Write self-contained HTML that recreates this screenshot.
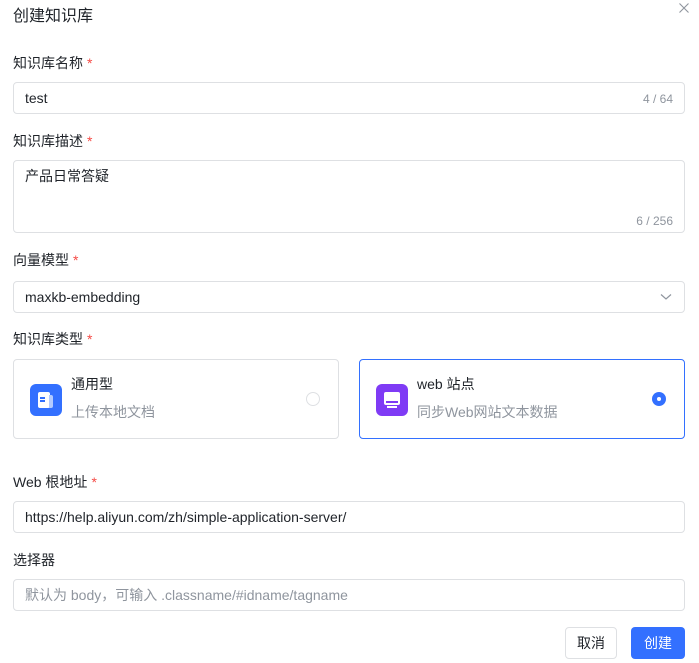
<!DOCTYPE html>
<html><head><meta charset="utf-8"><style>
*{box-sizing:border-box;margin:0;padding:0}
body{width:699px;height:663px;background:#fff;font-family:"Liberation Sans","Noto Sans CJK SC",sans-serif;color:#1f2329;position:relative;overflow:hidden;font-size:14px}
.a{position:absolute}
.lbl{position:absolute;left:13px;font-size:14px;color:#1f2329;line-height:20px}
.lbl i{color:#f54a45;font-style:normal;margin-left:4px}
.in{position:absolute;left:13px;width:672px;border:1px solid #dee0e3;border-radius:4px;background:#fff}
.cnt{position:absolute;right:11px;font-size:12px;color:#8f959e}
.txt{position:absolute;left:11px;font-size:14px;line-height:20px}
.card{position:absolute;top:359px;height:80px;border:1px solid #dee0e3;border-radius:4px}
.ic{position:absolute;left:16px;top:24px;width:32px;height:32px;border-radius:6px}
.t1{position:absolute;left:57px;top:14px;font-size:14px;line-height:20px}
.t2{position:absolute;left:57px;top:42px;font-size:14px;color:#8f959e;line-height:20px}
</style></head><body>
<div class="a" style="left:13px;top:6px;font-size:16px;line-height:22px">创建知识库</div>
<svg class="a" style="left:678px;top:2px" width="12" height="12" viewBox="0 0 12 12"><path d="M1.5 1.5L10.5 10.5M10.5 1.5L1.5 10.5" stroke="#8f959e" stroke-width="1.1"/></svg>

<div class="lbl" style="top:53px">知识库名称<i>*</i></div>
<div class="in" style="top:82px;height:32px"><div class="txt" style="top:5px">test</div><div class="cnt" style="top:9px">4 / 64</div></div>

<div class="lbl" style="top:131px">知识库描述<i>*</i></div>
<div class="in" style="top:160px;height:73px"><div class="txt" style="top:5px">产品日常答疑</div><div class="cnt" style="top:53px">6 / 256</div></div>

<div class="lbl" style="top:250px">向量模型<i>*</i></div>
<div class="in" style="top:281px;height:32px"><div class="txt" style="top:5px">maxkb-embedding</div>
<svg class="a" style="right:12px;top:11px" width="12" height="8" viewBox="0 0 12 8"><path d="M1 1.5L6 6L11 1.5" stroke="#8f959e" stroke-width="1.2" fill="none"/></svg></div>

<div class="lbl" style="top:329px">知识库类型<i>*</i></div>
<div class="card" style="left:13px;width:326px">
<div class="ic" style="background:#3370ff"><div class="a" style="left:8px;top:8px;width:12px;height:16px;background:#fff;border-radius:2px"></div><div class="a" style="left:19px;top:11px;width:4px;height:13px;background:#b3cbff;border-radius:0 2px 2px 0"></div><div class="a" style="left:10px;top:13px;width:5px;height:1.5px;background:#3370ff"></div><div class="a" style="left:10px;top:16px;width:5px;height:1.5px;background:#3370ff"></div></div>
<div class="t1">通用型</div><div class="t2">上传本地文档</div>
<div class="a" style="left:292px;top:32px;width:14px;height:14px;border:1px solid #dee0e3;border-radius:50%"></div>
</div>
<div class="card" style="left:359px;width:326px;border-color:#3370ff">
<div class="ic" style="background:#7f3bf5"><div class="a" style="left:8px;top:8px;width:16px;height:13px;background:#fff;border-radius:2px"></div><div class="a" style="left:10px;top:17px;width:12px;height:1.5px;background:#7f3bf5"></div><div class="a" style="left:11px;top:22px;width:10px;height:2px;background:#fff"></div></div>
<div class="t1">web 站点</div><div class="t2">同步Web网站文本数据</div>
<div class="a" style="left:292px;top:32px;width:14px;height:14px;background:#3370ff;border-radius:50%"><div class="a" style="left:5px;top:5px;width:4px;height:4px;background:#fff;border-radius:50%"></div></div>
</div>

<div class="lbl" style="top:472px">Web 根地址<i>*</i></div>
<div class="in" style="top:501px;height:32px"><div class="txt" style="top:5px">https://help.aliyun.com/zh/simple-application-server/</div></div>

<div class="lbl" style="top:550px">选择器</div>
<div class="in" style="top:579px;height:32px"><div class="txt" style="top:5px;color:#8f959e">默认为 body，可输入 .classname/#idname/tagname</div></div>

<div class="a" style="left:565px;top:627px;width:52px;height:32px;border:1px solid #dee0e3;border-radius:4px;text-align:center;line-height:30px">取消</div>
<div class="a" style="left:631px;top:627px;width:54px;height:32px;background:#3370ff;color:#fff;border-radius:4px;text-align:center;line-height:32px">创建</div>
</body></html>
